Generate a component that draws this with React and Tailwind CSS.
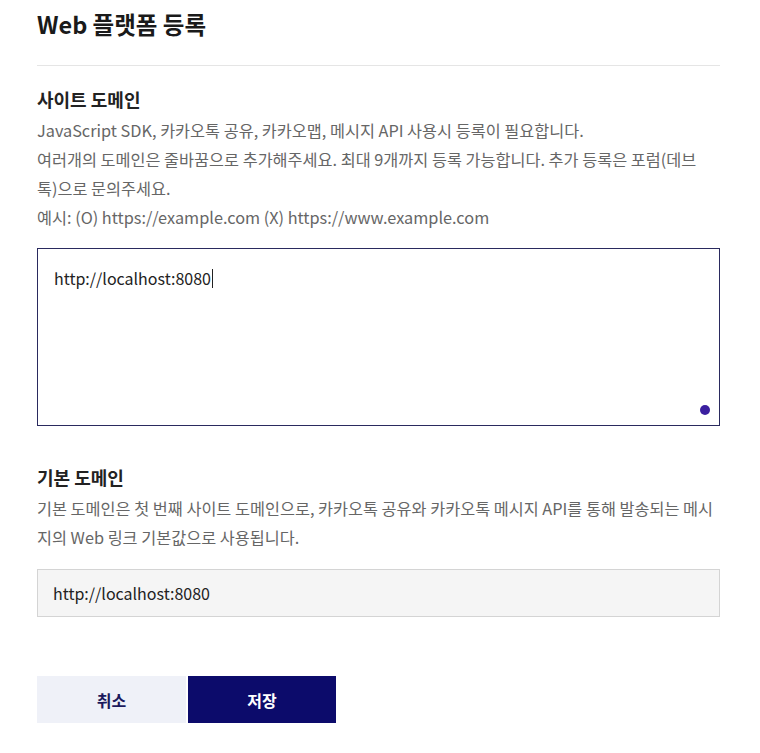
export default function App() {
  const font = { fontFamily: '"Noto Sans CJK KR", "Noto Sans", sans-serif' };
  return (
    <div className="w-[760px] min-h-[753px] bg-white" style={font}>
      <div className="ml-[37px] w-[683px] pt-[8px]">
        <h1 className="text-[23.5px] font-bold leading-[32px] text-[#1a1a1a]">Web 플랫폼 등록</h1>
        <div className="mt-[25px] h-px bg-[#e5e5e5]" />
        <h2 className="mt-[20px] text-[18px] font-bold leading-[26px] text-[#222]">사이트 도메인</h2>
        <div className="mt-[4px] text-[16.3px] leading-[29px] text-[#666]">
          <p>JavaScript SDK, 카카오톡 공유, 카카오맵, 메시지 API 사용시 등록이 필요합니다.</p>
          <p>여러개의 도메인은 줄바꿈으로 추가해주세요. 최대 9개까지 등록 가능합니다. 추가 등록은 포럼(데브<br />톡)으로 문의주세요.</p>
          <p>예시: (O) https://example.com (X) https://www.example.com</p>
        </div>
        <div className="relative mt-[16px] h-[178px] border border-[#2a2a5e] px-[16px] py-[17px]">
          <div className="flex items-center text-[16px] leading-[24px] text-[#222]">
            http://localhost:8080<span className="ml-px inline-block h-[19px] w-px bg-[#222]" />
          </div>
          <div className="absolute right-[9px] bottom-[10px] h-[10px] w-[10px] rounded-full bg-[#3b1fa0]" />
        </div>
        <h2 className="mt-[38px] text-[18px] font-bold leading-[26px] text-[#222]">기본 도메인</h2>
        <div className="mt-[4px] text-[16.3px] leading-[29px] text-[#666]">
          <p>기본 도메인은 첫 번째 사이트 도메인으로, 카카오톡 공유와 카카오톡 메시지 API를 통해 발송되는 메시<br />지의 Web 링크 기본값으로 사용됩니다.</p>
        </div>
        <div className="mt-[17px] flex h-[48px] items-center border border-[#d4d4d4] bg-[#f5f5f5] px-[15px] text-[16px] text-[#222]">
          http://localhost:8080
        </div>
        <div className="mt-[59px] flex gap-[2px]">
          <button className="h-[47px] w-[149px] bg-[#eff1f8] text-[16px] font-bold text-[#1c1a5c]">취소</button>
          <button className="h-[47px] w-[148px] bg-[#0c0b6b] text-[16px] font-bold text-white">저장</button>
        </div>
      </div>
    </div>
  );
}
